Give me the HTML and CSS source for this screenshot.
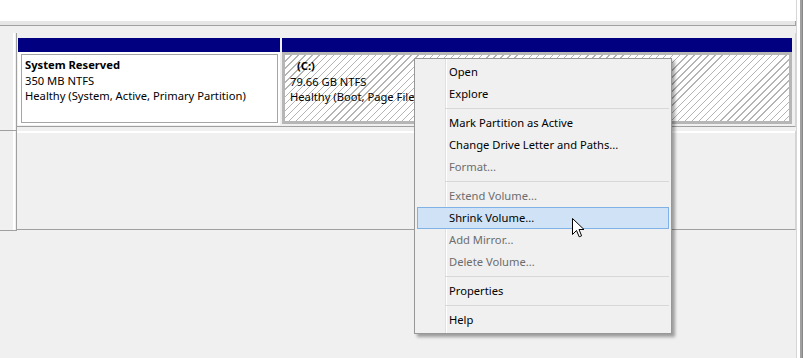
FILE: index.html
```html
<!DOCTYPE html>
<html>
<head>
<meta charset="utf-8">
<link rel="stylesheet" href="styles.css">
</head>
<body>
<div class="screen">
  <div class="main">
    <div class="toppane"></div>
    <div class="splitter"></div>
    <div class="disks">
      <div class="disk disk0">
        <div class="disklabel"></div>
        <div class="parts">
          <div class="part sysres">
            <div class="bar"></div>
            <div class="box">
              <div class="inner">
                <div class="pname">System Reserved</div>
                <div>350 MB NTFS</div>
                <div>Healthy (System, Active, Primary Partition)</div>
              </div>
            </div>
          </div>
          <div class="part cdrive">
            <div class="bar"></div>
            <div class="box">
              <div class="pname cname">(C:)</div>
              <div>79.66 GB NTFS</div>
              <div>Healthy (Boot, Page File, Crash Dump, Primary Partition)</div>
            </div>
          </div>
        </div>
      </div>
      <div class="disk disk1">
        <div class="disklabel"></div>
        <div class="parts empty"></div>
      </div>
    </div>
  </div>
  <div class="edge"></div>
</div>

<div class="menu">
  <div class="item">Open</div>
  <div class="item">Explore</div>
  <div class="sep"></div>
  <div class="item">Mark Partition as Active</div>
  <div class="item">Change Drive Letter and Paths...</div>
  <div class="item disabled">Format...</div>
  <div class="sep"></div>
  <div class="item disabled">Extend Volume...</div>
  <div class="item hover">Shrink Volume...</div>
  <div class="item disabled">Add Mirror...</div>
  <div class="item disabled">Delete Volume...</div>
  <div class="sep"></div>
  <div class="item">Properties</div>
  <div class="sep"></div>
  <div class="item">Help</div>
</div>

<svg class="cursor" width="13" height="21" viewBox="0 0 13 21">
  <path d="M0.5 0.5 L0.5 16.5 L4.5 12.5 L7.2 18.8 L9.6 17.8 L7 11.5 L12 11.5 Z" fill="#fff" stroke="#000" stroke-width="1" stroke-linejoin="miter"/>
</svg>
</body>
</html>
```

FILE: styles.css
```css
* { box-sizing: border-box; }

body {
  margin: 0;
  width: 803px;
  height: 358px;
  overflow: hidden;
  background: #f0f0f0;
  font-family: "Noto Sans", "Open Sans", sans-serif;
  font-size: 11.2px;
  color: #000;
}

.screen {
  display: flex;
  height: 358px;
}

.main {
  width: 796px;
}

.toppane {
  height: 21px;
  background: #fff;
}

.splitter {
  height: 5px;
  background: #e6e6e6;
  border-bottom: 1px solid #a0a0a0;
  border-right: 1px solid #a0a0a0;
}

.disks {
  padding-top: 7px;
}

.disk {
  display: flex;
  align-items: flex-start;
}

.disk0 { height: 98px; }
.disk1 { height: 100px; }

.disklabel {
  width: 17px;
  height: 100%;
  border-right: 1px solid #a0a0a0;
  border-bottom: 1px solid #a0a0a0;
  background: linear-gradient(90deg, #f0f0f0 0 13px, #fff 13px 15px, #f0f0f0 15px);
}

.parts {
  flex: 1;
  display: flex;
  gap: 2px;
  height: 94px;
  padding: 5px 3px 0 1px;
  border-bottom: 1px solid #a0a0a0;
  border-right: 1px solid #d4d4d4;
}

.parts.empty {
  height: 99px;
  padding: 0;
  box-shadow: inset 0 2px 0 #fff;
}

.part {
  display: flex;
  flex-direction: column;
}

.sysres { width: 262px; }
.cdrive { width: 510px; }

.bar {
  height: 14px;
  background: #000080;
}

.sysres .box {
  height: 73px;
  background: #fff;
  padding: 2px 2px 2px 3px;
}

.sysres .inner {
  height: 100%;
  border: 1px solid #a5a5a5;
  padding: 2px 0 0 3px;
  line-height: 15.5px;
  white-space: nowrap;
  overflow: hidden;
}

.cdrive .box {
  height: 72px;
  border: 3px solid #b6b6b6;
  padding: 3px 0 0 5px;
  line-height: 15.5px;
  white-space: nowrap;
  overflow: hidden;
  background: repeating-linear-gradient(135deg, #fff 0 4px, #b4b4b4 4px 5px);
}

.pname {
  font-weight: bold;
}

.cname {
  padding-left: 7px;
}

.edge {
  width: 7px;
  background: linear-gradient(90deg, #d6d6d6 0 1px, #fff 1px 4px, #a0a0a0 4px 6px, #888 6px 7px);
}

.menu {
  position: absolute;
  left: 414px;
  top: 58px;
  width: 258px;
  padding: 2px;
  background: linear-gradient(90deg, transparent 0 30px, #e0e0e0 30px 31px, #fff 31px 32px, transparent 32px), #f0f0f0;
  border: 1px solid #979797;
  box-shadow: 3px 3px 3px rgba(0, 0, 0, 0.35);
}

.item {
  height: 22px;
  line-height: 20px;
  padding-left: 31px;
  border: 1px solid transparent;
  white-space: nowrap;
}

.item.disabled {
  color: #6d6d6d;
}

.item.hover {
  background: #cfe2f6;
  border-color: #7fb2e6;
}

.sep {
  height: 7px;
  margin-left: 28px;
  padding-top: 3px;
}

.sep::before {
  content: "";
  display: block;
  height: 1px;
  background: #d7d7d7;
}

.cursor {
  position: absolute;
  left: 572px;
  top: 218px;
}
```
